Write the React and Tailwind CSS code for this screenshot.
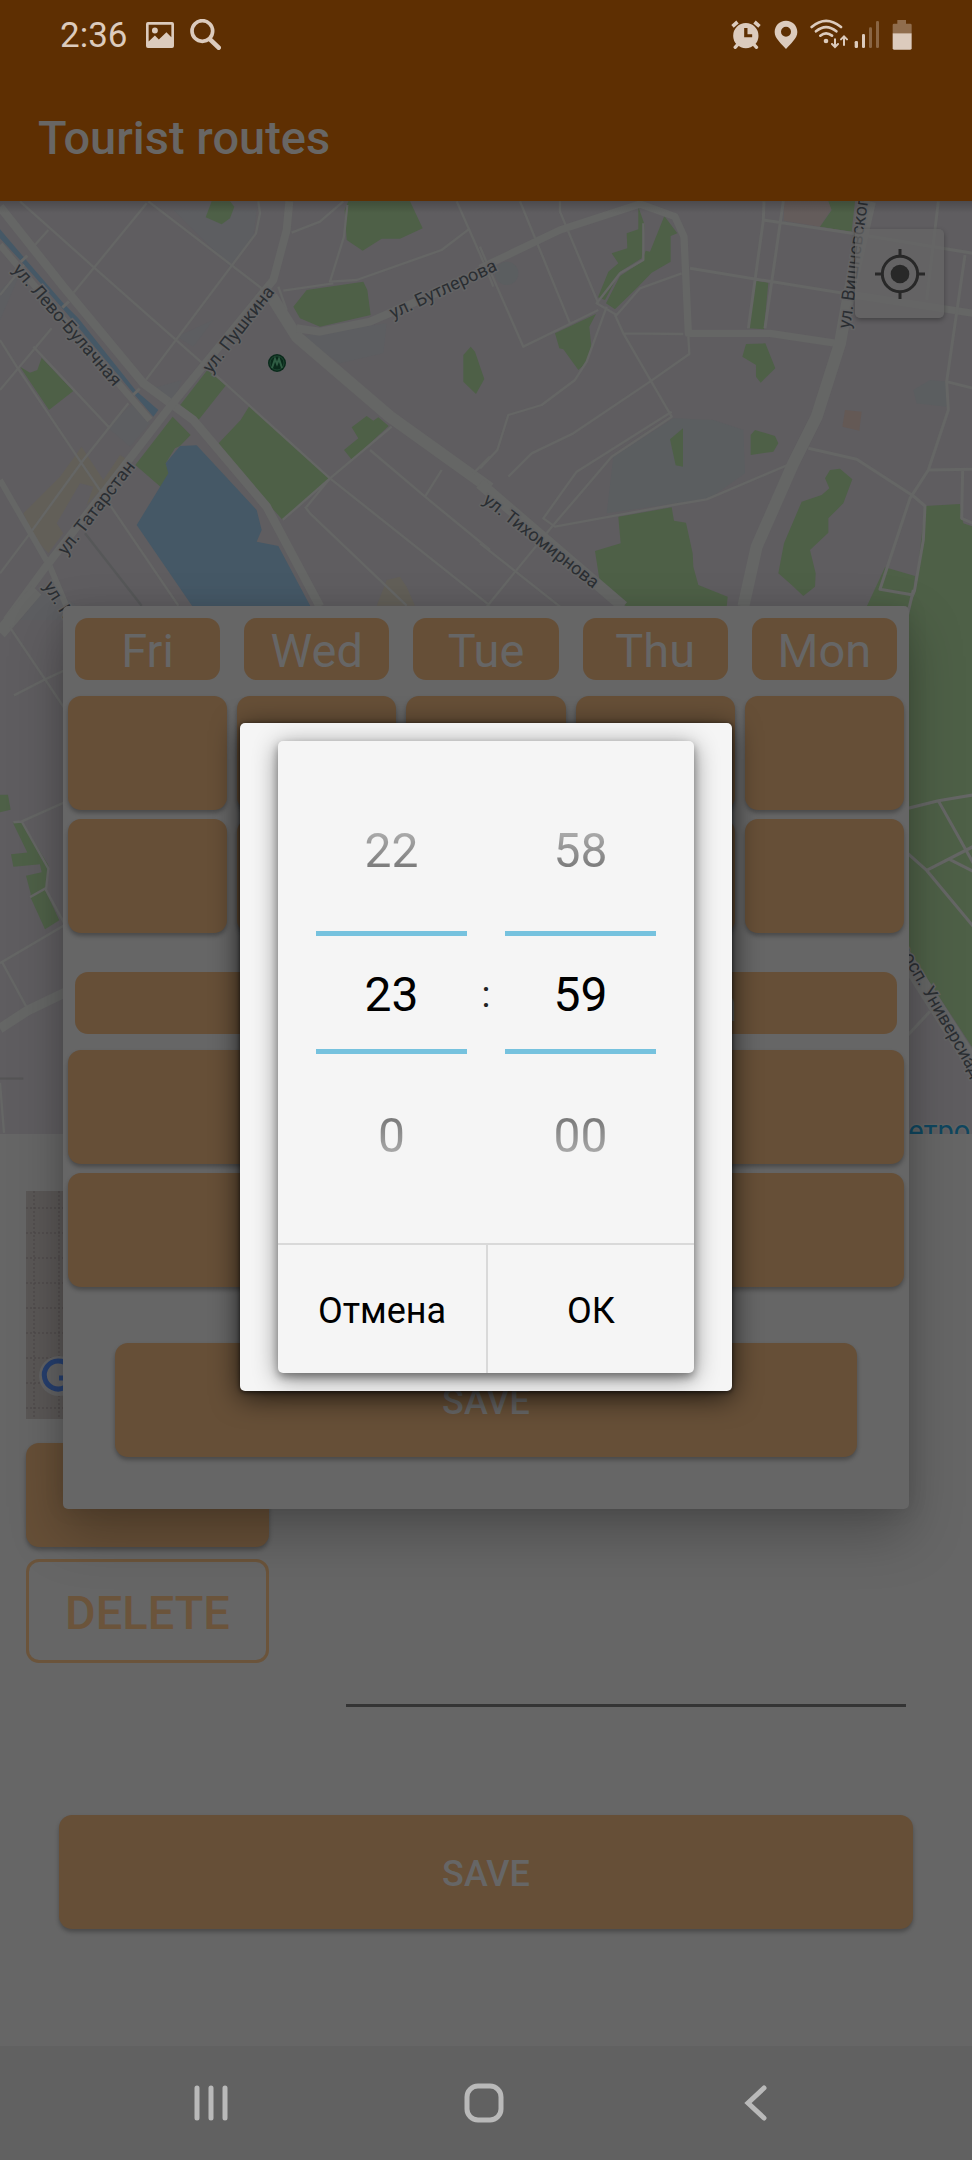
import React from "react";

function StatusBar() {
  return (
    <div className="flex h-[69px] items-center pl-[60px] pr-[60px] text-[#dccbbd]">
      <span className="pt-[2px] text-[35px] leading-[40px]">2:36</span>
      <svg className="ml-[18px] h-[26px] w-[28px]" viewBox="438 62 85 79" fill="currentColor" aria-hidden="true">
        <path fillRule="evenodd" d="M444 62h73q6 0 6 6v67q0 6-6 6h-73q-6 0-6-6V68q0-6 6-6zM446 70v51l19-18 12 12 23-22 15 15V70zM465 79a9 9 0 1 1 0 18a9 9 0 1 1 0-18z" />
      </svg>
      <svg className="ml-4 h-[31px] w-[31px]" viewBox="569 56 93 93" fill="none" stroke="currentColor" aria-hidden="true">
        <circle cx="606" cy="92" r="31" strokeWidth="11" />
        <path d="M629 117l26 25" strokeWidth="14" strokeLinecap="round" />
      </svg>
      <svg className="ml-auto h-[29px] w-[30px]" viewBox="736 60 89 87" fill="currentColor" aria-hidden="true">
        <path fillRule="evenodd" d="M780 69a38 38 0 1 1 0 76a38 38 0 1 1 0-76zM775 84v28h24v-9h-14V84z" />
        <path d="M740 79l15-13M821 79l-15-13" stroke="currentColor" strokeWidth="11" />
        <path d="M756 133l-8 9M804 133l8 9" stroke="currentColor" strokeWidth="10" strokeLinecap="round" />
      </svg>
      <svg className="ml-[13px] h-[29px] w-[24px]" viewBox="865 60 72 87" fill="currentColor" aria-hidden="true">
        <path fillRule="evenodd" d="M901 62c20 0 34 15 34 34c0 20-20 34-34 51c-14-17-34-31-34-51c0-19 14-34 34-34zM901 80a15 15 0 1 0 0 30a15 15 0 1 0 0-30z" />
      </svg>
      <svg className="ml-3 h-[31px] w-[38px]" viewBox="973 56 114 93" fill="none" stroke="currentColor" aria-hidden="true">
        <path d="M978 80q43-37 88 0M991 93q30-25 61 0M1004 106q17-14 35 0" strokeWidth="8" strokeLinecap="round" />
        <circle cx="1021" cy="122" r="7" fill="currentColor" stroke="none" />
        <path d="M1048 117v22M1039 131l9 9l9-9M1075 134v-25M1066 117l9-9l9 9" strokeWidth="6" strokeLinecap="round" />
      </svg>
      <svg className="ml-[6px] h-[29px] w-[26px]" viewBox="1107 60 78 87" fill="currentColor" aria-hidden="true">
        <rect x="1109" y="123" width="10" height="21" rx="4" />
        <rect x="1131" y="102" width="9" height="42" rx="4" />
        <rect x="1152" y="82" width="9" height="62" rx="4" opacity=".35" />
        <rect x="1173" y="63" width="9" height="81" rx="4" opacity=".35" />
      </svg>
      <svg className="ml-3 h-[30px] w-[20px]" viewBox="1219 57 60 90" fill="currentColor" aria-hidden="true">
        <path d="M1235 57h26v11h13q4 0 4 4v25h-57V72q0-4 4-4h10z" opacity=".4" />
        <path d="M1221 97h57v45q0 4-4 4h-49q-4 0-4-4z" />
      </svg>
    </div>
  );
}

function CityMap() {
  return (
    <svg className="block h-full w-full" viewBox="0 201 972 933" preserveAspectRatio="xMidYMin slice" role="img" aria-label="Map">
      <rect x="0" y="201" width="972" height="933" fill="#5f5d60" />

      <g transform="translate(0 190) scale(.33333)">
        <g fill="#5d5e61">
          <path d="M520 60L770 60L760 140L690 230L570 110z" />
          <path d="M900 440L980 425L1160 400L1150 490L1020 520z" />
          <path d="M320 710L400 640L450 700L390 770z" />
          <path d="M440 600L545 570L520 640z" />
          <path d="M530 440L640 390L580 470z" />
          <path d="M0 300L60 250L0 390z" />
          <path d="M60 1290L140 1190L300 1290z" />
        </g>
        <g fill="#67624f" opacity=".45">
          <path d="M70 970L180 860L245 770L310 870L360 795L385 810L260 945L280 890L240 880L170 1000L190 1030L145 1090L100 1040z" />
          <path d="M1130 1247L1160 1170L1200 1160L1220 1190L1245 1247z" />
        </g>
        <g fill="#4e6047">
          <path d="M635 34L690 34L703 50L690 85L665 103L617 82z" />
          <path d="M1045 34L1230 34L1268 115L1200 146L1145 146L1088 182L1040 150L1034 60z" />
          <path d="M880 350L920 300L1090 275L1102 300L1112 375L960 410L900 385z" />
          <path d="M60 530L90 548L112 540L125 503L220 603L147 660z" />
          <path d="M622 540L678 586L588 700L532 656z" />
          <path d="M518 680L572 735L540 768L525 775L497 820L508 850L483 892L406 825z" />
          <path d="M748 648L992 865L848 990L648 768L722 690z" />
          <path d="M1055 712L1100 678L1120 692L1135 682L1166 708L1056 810L1032 780L1075 745z" />
          <path d="M1412 470L1425 485L1453 567L1428 612L1390 575L1390 495z" />
        </g>
        <path d="M540 768L590 766L770 960L785 1020L770 1055L835 1068L932 1250L578 1250L410 1005L505 850L497 820z" fill="#455866" />
        <g fill="none" stroke="#656665" strokeLinejoin="round">
          <path d="M60 34L285 235L630 540L990 865L1470 1247" strokeWidth="7" />
          <path d="M445 34L850 345" strokeWidth="7" />
          <path d="M440 40L215 315M145 120L100 170" strokeWidth="7" />
          <path d="M775 34L780 70L768 130L430 580" strokeWidth="7" />
          <path d="M0 315L80 215M0 600L155 415" strokeWidth="7" />
          <path d="M0 450L50 530L245 820L535 1247M100 470L325 710M385 640L250 810L90 1030L0 1150" strokeWidth="7" />
          <path d="M0 870L150 1130L200 1250" strokeWidth="18" />
          <path d="M1030 34L960 95L875 128M1042 45L1032 140L990 275L1070 270L1325 180L1410 115M1370 34L1450 215L1480 290" strokeWidth="7" />
          <path d="M850 302L1000 280M835 290L860 360" strokeWidth="7" />
          <path d="M0 50L190 290L430 580L580 690L800 950L960 1250" strokeWidth="26" />
          <path d="M0 165L200 400L450 690" strokeWidth="20" />
          <path d="M868 34L860 120L820 270L510 650L340 870L130 1140L20 1290" strokeWidth="24" />
          <path d="M815 320L890 440L1170 680L1470 895" strokeWidth="36" />
          <path d="M890 415L960 425L1110 395L1480 235" strokeWidth="24" />
          <path d="M1175 710L990 865L920 950M990 865L848 990M1110 780L1275 920L1325 840M1275 920L1470 1080M915 950L930 970L1220 1247M1470 800L1420 850" strokeWidth="7" />
        </g>
        <path d="M0 118L70 200L190 340L235 385L408 602L475 660L460 680L400 610L200 370L60 210L0 145z" fill="#455866" />
        <path d="M255 1030L425 1247" stroke="#565758" strokeWidth="7" />
        <path d="M62 216L82 197M187 353L207 334M399 615L419 596" stroke="#656665" strokeWidth="9" />
      </g>

      <g transform="translate(480 190) scale(.33333)">
        <g fill="#5b5e60">
          <path d="M400 800L580 685L700 690L790 720L795 850L690 925L380 970z" />
          <path d="M1300 600L1350 570L1405 575L1400 650L1310 640z" />
          <circle cx="80" cy="250" r="35" />
        </g>
        <path d="M912 34L1045 34L1055 55L1020 110L912 92z" fill="#645c5b" />
        <path d="M1095 660L1145 665L1138 722L1087 710z" fill="#645955" />
        <g fill="#4e6047">
          <path d="M475 50L494 105L485 205L420 245L375 330L354 322L385 245L415 220L395 190L442 175L440 130L475 118z" />
          <path d="M553 78L592 130L572 138L572 215L515 248L470 295L405 358L378 340L420 258L485 215L497 182L510 185z" />
          <path d="M225 430L348 372L328 410L334 470L318 520L295 540L250 478L238 475z" />
          <path d="M1045 34L1125 34L1115 125L1020 110L1055 60z" />
          <path d="M825 272L865 278L852 418L806 415z" />
          <path d="M798 462L856 460L886 535L842 578L828 560L828 525L787 500z" />
          <path d="M609 715L609 830L587 826L570 748z" />
          <path d="M812 735L825 720L885 738L895 760L880 785L812 795z" />
          <path d="M1050 840L1080 836L1117 868L1090 940L1045 985L1045 1028L990 1080L1007 1150L1005 1190L970 1218L935 1185L895 1150L912 1060L965 935L1025 915L1048 895L1035 865z" />
          <path d="M415 980L575 952L582 992L618 998L638 1090L640 1130L655 1185L743 1220L740 1250L440 1250L360 1180L345 1083L422 1060z" />
          <path d="M1335 948L1440 942L1450 1000L1480 1010L1480 1300L1280 1300L1305 1215z" />
          <path d="M1215 1132L1305 1158L1300 1215L1290 1250L1160 1250z" />
        </g>
        <g fill="none" stroke="#656665" strokeLinejoin="round">
          <path d="M0 170L40 265L130 470L355 360M120 34L270 400M240 34L240 65L355 340" strokeWidth="7" />
          <path d="M0 235L240 120L480 42L585 80L612 140L625 430L870 430L1070 460" strokeWidth="22" />
          <path d="M605 250L480 295L410 375L350 340L420 250L490 210L490 100M405 375L430 430L575 680L395 800L220 1005L20 1250M430 430L610 432M625 440L628 492L510 575L280 730L155 790L85 860" strokeWidth="7" />
          <path d="M380 350L320 515L285 570L185 645L85 675L52 780L0 835M575 665L290 845L190 985L225 1010L580 945L680 928L930 822" strokeWidth="7" />
          <path d="M852 34L850 90L805 415M910 34L855 415M850 90L1115 130L1480 190M630 235L1090 310" strokeWidth="9" />
          <path d="M1090 310L1480 370" strokeWidth="22" />
          <path d="M1170 34L1105 320L1080 460L1010 680L940 820L830 1070L790 1250" strokeWidth="36" />
          <path d="M1375 34L1340 330M1455 195L1400 575L1405 660L1345 840L1290 925L1200 1198L1300 1215M1400 575L1480 595M1345 840L1480 838M1448 840L1445 985L1480 1000M985 775L1130 808L1300 918L1335 948L1330 1050L1295 1250" strokeWidth="9" />
          <path d="M0 880L430 1250" strokeWidth="34" />
          <path d="M0 1060L240 1250" strokeWidth="7" />
        </g>
      </g>

      <g transform="translate(0 590) scale(.33333 .35714)">
        <g fill="#4e6047">
          <path d="M0 573L24 573L32 615L0 622z" />
          <path d="M38 650L66 650L145 770L138 845L178 925L135 950L92 862L92 850L78 800L125 790L120 768L40 775L33 740L82 735z" />
        </g>
        <g fill="none" stroke="#656665" strokeWidth="7">
          <path d="M0 120L110 0" strokeWidth="38" />
          <path d="M30 105L135 250L200 340M42 295L135 250L200 222M40 650L65 648L200 592M65 648L145 780L138 840L200 945M90 860L138 835M0 1045L200 935M5 1040L82 1172M0 1380L12 1520" />
          <path d="M0 1228L82 1178L200 1125" strokeWidth="28" />
        </g>
        <path d="M0 1368H70" stroke="#555455" strokeWidth="6" />
      </g>

      <g transform="translate(480 590) scale(.33333 .35714)">
        <path d="M1280 60L1310 0L1480 0L1480 1285L1280 1000z" fill="#4e6047" />
        <g fill="none" stroke="#656665" strokeWidth="9">
          <path d="M1300 0L1280 80M1280 612L1375 590L1480 574M1375 590L1480 765M1280 735L1340 785L1480 942M1340 785L1480 718M1410 755L1480 788M1280 1250L1350 1180" />
          <path d="M1262 1010L1480 1330" strokeWidth="44" />
        </g>
      </g>

      <g fill="#2a2e32" stroke="#636364" strokeWidth="3" paintOrder="stroke" fontSize="18">
        <text transform="translate(12 270) rotate(49)">ул. Лево-Булачная</text>
        <text transform="translate(211 374) rotate(-52)">ул. Пушкина</text>
        <text transform="translate(393 319) rotate(-25)">ул. Бутлерова</text>
        <text transform="translate(66 556) rotate(-52)">ул. Татарстан</text>
        <text transform="translate(43 586) rotate(58)">ул. Карла Маркса</text>
        <text transform="translate(482 502) rotate(38)">ул. Тихомирнова</text>
        <text transform="translate(850 329) rotate(-82)">ул. Вишневского</text>
        <text transform="translate(892 939) rotate(60)">просп. Универсиады</text>
      </g>
      <text x="883" y="1141" fontSize="29" fill="#0f465f" stroke="#626262" strokeWidth="3" paintOrder="stroke">Метро</text>
      <circle cx="277" cy="363" r="9" fill="#0a2a1b" />
      <circle cx="277" cy="363" r="7" fill="none" stroke="#1d4631" strokeWidth="1" />
      <path d="M272 368l3-9l2 5l2-5l3 9" fill="none" stroke="#2f5c43" strokeWidth="2" />
    </svg>
  );
}

function LocateButton() {
  return (
    <button
      type="button"
      aria-label="My location"
      className="absolute right-7 top-7 flex size-[89px] items-center justify-center rounded-[5px] bg-[#666666]/75 shadow-[0_2px_5px_rgba(0,0,0,0.3)]"
    >
      <svg className="size-[50px]" viewBox="-75 -75 150 150" fill="none" stroke="#282828" strokeWidth="9" aria-hidden="true">
        <circle r="53" />
        <circle r="28" fill="#282828" stroke="none" />
        <path d="M0-75V-53M0 75V53M-75 0H-53M75 0H53" />
      </svg>
    </button>
  );
}

function PlaceThumb() {
  return (
    <svg className="block h-[228px] w-full" viewBox="0 0 243 228" preserveAspectRatio="xMinYMin slice" role="img" aria-label="Place preview">
      <rect width="243" height="228" fill="#5a5756" />
      <g stroke="#4a4746" strokeDasharray="2 2">
        {[17, 42, 67, 92, 117, 142, 167, 192, 217].map((y) => (
          <path key={y} d={`M0 ${y}H243`} />
        ))}
        {[8, 33, 58, 83].map((x) => (
          <path key={x} d={`M${x} 0V228`} />
        ))}
      </g>
      <circle cx="33" cy="185" r="20" fill="#626263" />
      <path d="M43 175a14 14 0 1 0 3 12H33" fill="none" stroke="#263f6e" strokeWidth="5" />
    </svg>
  );
}

const solid =
  "rounded-[13px] bg-[#664f37] text-[#666666] shadow-[0_3px_4px_rgba(0,0,0,0.28)]";

function DayColumn({ name }) {
  return (
    <div className="flex flex-col">
      <div className="mx-3 flex h-[62px] items-center justify-center rounded-[13px] bg-[#664f37] pt-[2px] text-[47px] leading-none text-[#666666]">
        {name}
      </div>
      <button type="button" aria-label={`${name} opens`} className={`mx-[5px] mt-4 h-[114px] ${solid}`} />
      <button type="button" aria-label={`${name} closes`} className={`mx-[5px] mt-[9px] h-[114px] ${solid}`} />
    </div>
  );
}

function ScheduleDialog() {
  return (
    <div className="absolute inset-0 flex items-center px-[63px] pb-[114px] pt-[69px]">
      <div role="dialog" aria-label="Schedule" className="w-full rounded-[5px] bg-[#666666] pb-[52px] pt-3 shadow-[0_24px_54px_rgba(0,0,0,0.26),0_0_20px_rgba(0,0,0,0.1)]">
        <div className="grid grid-cols-5">
          {["Fri", "Wed", "Tue", "Thu", "Mon"].map((d) => (
            <DayColumn key={d} name={d} />
          ))}
        </div>
        <div className="mt-[39px] grid grid-cols-2">
          {["Sat", "Sun"].map((d) => (
            <DayColumn key={d} name={d} />
          ))}
        </div>
        <div className="mt-14 flex px-[52px]">
          <button type="button" className={`h-[114px] w-full pt-1 text-[36px] font-medium ${solid}`}>SAVE</button>
        </div>
      </div>
    </div>
  );
}

function Wheel({ label, previous, value, next }) {
  const side = "h-[60px] bg-clip-text text-[48px] leading-[60px] text-transparent";
  return (
    <div className="flex w-[151px] flex-col items-stretch">
      <button type="button" aria-label={`${label}: ${previous}`} className={`${side} bg-linear-to-b from-[#bbbbbb] to-[#6a6a6a]`}>{previous}</button>
      <div className="mb-[52px] mt-[50px] border-y-5 border-[#76c2de]">
        <input
          aria-label={label}
          defaultValue={value}
          className="block h-[113px] w-full bg-transparent pt-1 text-center text-[48px] text-black outline-none"
        />
      </div>
      <button type="button" aria-label={`${label}: ${next}`} className={`${side} bg-linear-to-b from-[#6a6a6a] to-[#bbbbbb]`}>{next}</button>
    </div>
  );
}

function TimeDialog() {
  return (
    <div className="absolute inset-0 flex items-center justify-center pb-[114px] pt-[68px]">
      <div role="dialog" aria-label="Time" className="w-[492px] rounded-[5px] bg-[#f5f5f5] px-[38px] py-[18px] shadow-[0_6px_28px_rgba(0,0,0,0.7),0_1px_5px_rgba(0,0,0,0.7)]">
        <div className="rounded-[5px] bg-[#f5f5f5] shadow-[0_5px_24px_rgba(0,0,0,0.45),0_4px_8px_rgba(0,0,0,0.35)]">
          <div className="flex h-[502px] items-center justify-center pt-[2px]">
            <Wheel label="Hours" previous="22" value="23" next="0" />
            <span className="w-[38px] pt-1 text-center text-[37px] leading-[48px] text-[#222222]">:</span>
            <Wheel label="Minutes" previous="58" value="59" next="00" />
          </div>
          <div className="grid h-[130px] grid-cols-2 border-t-2 border-[#d9d9d9] text-[36px] text-black">
            <button type="button" className="pt-1">Отмена</button>
            <button type="button" className="border-l-2 border-[#d9d9d9] pt-1">ОК</button>
          </div>
        </div>
      </div>
    </div>
  );
}

function NavBar() {
  const key = "flex h-full w-[130px] items-center justify-center";
  return (
    <nav className="flex h-[114px] items-center justify-between bg-[#616161] pl-[146px] pr-[151px] text-[#b9b9b9]">
      <button type="button" aria-label="Recents" className={key}>
        <svg className="h-[38px] w-[35px]" viewBox="0 0 35 38" stroke="currentColor" strokeWidth="5" strokeLinecap="round" aria-hidden="true">
          <path d="M3 4V34M17 4V34M31 4V34" />
        </svg>
      </button>
      <button type="button" aria-label="Home" className={key}>
        <svg className="size-[40px]" viewBox="0 0 40 40" fill="none" stroke="currentColor" strokeWidth="5" aria-hidden="true">
          <rect x="3" y="3" width="34" height="34" rx="11" />
        </svg>
      </button>
      <button type="button" aria-label="Back" className={key}>
        <svg className="h-[38px] w-[24px]" viewBox="0 0 24 38" fill="none" stroke="currentColor" strokeWidth="5" strokeLinecap="round" aria-hidden="true">
          <path d="M20 4L4 19L20 34" />
        </svg>
      </button>
    </nav>
  );
}

export default function App() {
  return (
    <div className="relative flex min-h-screen flex-col overflow-hidden bg-[#666666] font-['Roboto',sans-serif]">
      <header className="bg-[#5e2f02]">
        <StatusBar />
        <h1 className="flex h-[132px] items-center px-[38px] pt-1 text-[47px] font-medium leading-none text-[#686664]">
          Tourist routes
        </h1>
      </header>

      <main className="flex flex-1 flex-col">
        <section className="relative h-[933px]">
          <CityMap />
          <div className="absolute inset-x-0 top-0 h-3 bg-linear-to-b from-black/20 to-transparent" />
          <LocateButton />
        </section>
        <section className="flex items-start pl-[26px] pr-[66px] pt-[57px]">
          <div className="flex w-[243px] flex-col">
            <PlaceThumb />
            <button type="button" aria-label="Edit" className={`mt-6 h-[104px] ${solid}`} />
            <button type="button" className="mt-3 h-[104px] rounded-[13px] border-3 border-[#6b543b] pt-[2px] text-[47px] font-medium leading-none text-[#6b543b]">
              DELETE
            </button>
          </div>
          <input
            aria-label="Title"
            className="ml-[77px] mt-[416px] h-[100px] min-w-0 flex-1 border-b-3 border-[#343434] bg-transparent text-[37px] text-[#222222] outline-none"
          />
        </section>
        <div className="mt-[108px] flex px-[59px]">
          <button type="button" className={`h-[114px] w-full pt-1 text-[36px] font-medium ${solid}`}>SAVE</button>
        </div>
      </main>

      <NavBar />
      <ScheduleDialog />
      <TimeDialog />
    </div>
  );
}
